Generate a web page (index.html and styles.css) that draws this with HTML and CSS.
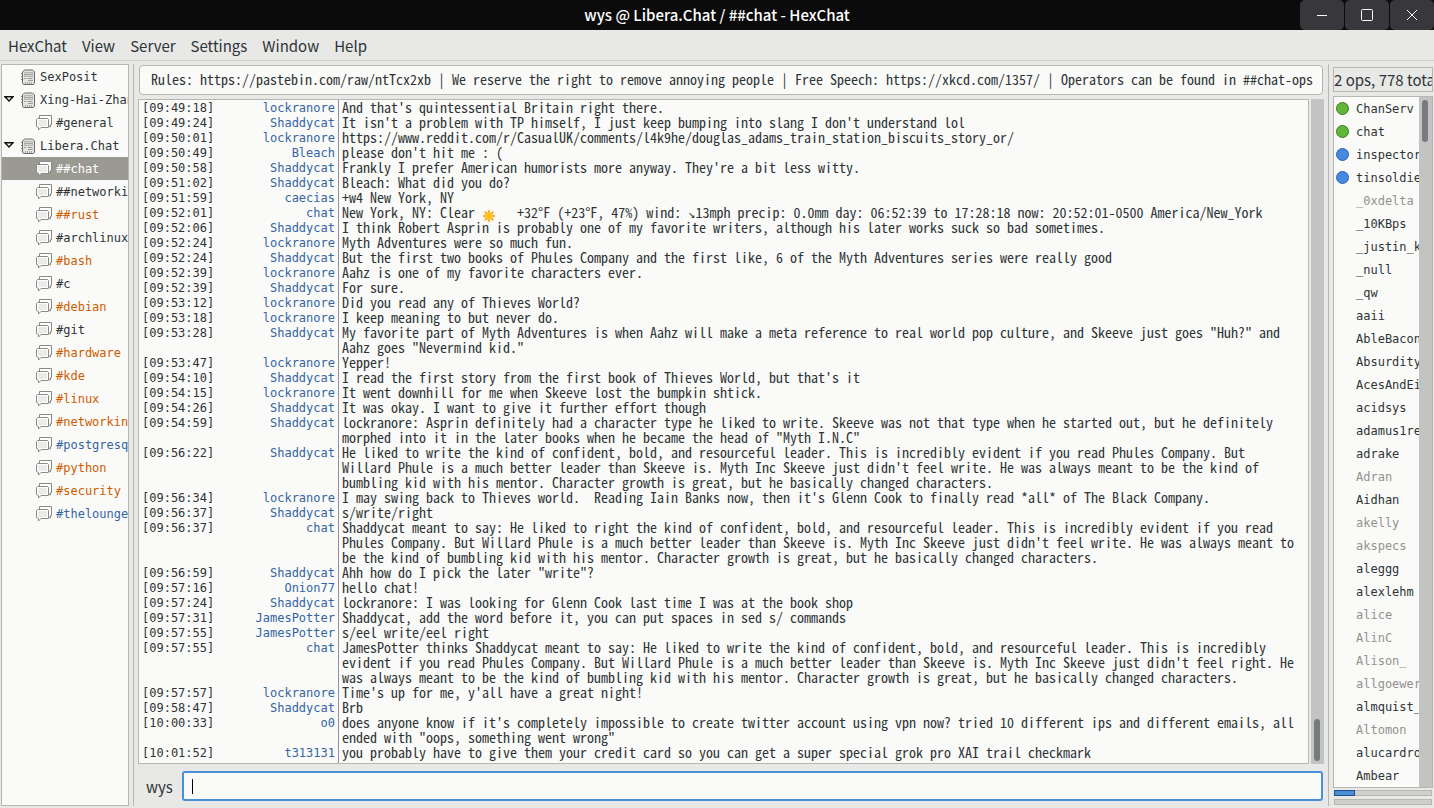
FILE: index.html
```html
<!DOCTYPE html>
<html lang="en">
<head>
<meta charset="utf-8">
<title>wys @ Libera.Chat / ##chat - HexChat</title>
<link rel="stylesheet" href="styles.css">
</head>
<body>
<svg class="defs" aria-hidden="true">
  <symbol id="server" viewBox="0 0 16 16">
    <path d="M1 4.500h14M1 7.500h14M1 10.500h14" stroke="#888a85"/>
    <path d="M2.500 14V3L4.500 1H12.500L14.500 3V14L13.500 15.500H3.500Z" fill="#e4e4e2" stroke="#6a6c69"/>
    <path d="M4.500 3.500h8v4h-8z" fill="#d3d5d1" stroke="#b4b6b2"/>
    <path d="M5 5.500h7" stroke="#a2a4a0"/>
    <path d="M4 9.500h2M7.500 9.500h5M8 11.500h5" stroke="#9a9c98"/>
    <path d="M5.500 13v2M7.500 13v2M9.500 13v2M11.500 13v2" stroke="#a8aaa6"/>
  </symbol>
  <symbol id="chan" viewBox="0 0 16 16">
    <path d="M3.500 4V.500H15.500V9.500H14.500V12L12 10" fill="#fff" stroke="#888a85"/>
    <path d="M1.500 3.500H11.500L12.500 4.500V12.500H5L2.500 15V12.500L.500 11.500V4.500Z" fill="#fff" stroke="#888a85"/>
    <path d="M2 5h9v6h-9z" fill="#ebebe9"/>
  </symbol>
  <symbol id="open" viewBox="0 0 10 6">
    <path d="M1 .800H9L5 5Z" fill="#fff" stroke="#111" stroke-width="1.400"/>
  </symbol>
</svg>
<div class="window">
  <header class="titlebar">
    <h1 class="title">wys @ Libera.Chat / ##chat - HexChat</h1>
    <div class="controls">
      <button class="control" aria-label="Minimize"><svg viewBox="0 0 14 14"><path d="M2 7.500h10"/></svg></button>
      <button class="control" aria-label="Maximize"><svg viewBox="0 0 14 14"><rect x="1.500" y="1.500" width="11" height="11" rx="1"/></svg></button>
      <button class="control" aria-label="Close"><svg viewBox="0 0 14 14"><path d="M2 2l10 10M12 2L2 12"/></svg></button>
    </div>
  </header>
  <nav class="menubar">
    <button class="menu">HexChat</button><button class="menu">View</button><button class="menu">Server</button><button class="menu">Settings</button><button class="menu">Window</button><button class="menu">Help</button>
  </nav>
  <div class="body">
    <nav class="tree">
      <button class="node server"><i class="arrow"></i><svg><use href="#server"/></svg>SexPosit</button>
      <button class="node server"><svg class="arrow"><use href="#open"/></svg><svg><use href="#server"/></svg>Xing-Hai-Zhan</button>
      <button class="node"><svg><use href="#chan"/></svg>#general</button>
      <button class="node server"><svg class="arrow"><use href="#open"/></svg><svg><use href="#server"/></svg>Libera.Chat</button>
      <button class="node selected"><svg><use href="#chan"/></svg>##chat</button>
      <button class="node"><svg><use href="#chan"/></svg>##networkin</button>
      <button class="node unread"><svg><use href="#chan"/></svg>##rust</button>
      <button class="node"><svg><use href="#chan"/></svg>#archlinux</button>
      <button class="node unread"><svg><use href="#chan"/></svg>#bash</button>
      <button class="node"><svg><use href="#chan"/></svg>#c</button>
      <button class="node unread"><svg><use href="#chan"/></svg>#debian</button>
      <button class="node"><svg><use href="#chan"/></svg>#git</button>
      <button class="node unread"><svg><use href="#chan"/></svg>#hardware</button>
      <button class="node unread"><svg><use href="#chan"/></svg>#kde</button>
      <button class="node unread"><svg><use href="#chan"/></svg>#linux</button>
      <button class="node unread"><svg><use href="#chan"/></svg>#networking</button>
      <button class="node highlight"><svg><use href="#chan"/></svg>#postgresql</button>
      <button class="node unread"><svg><use href="#chan"/></svg>#python</button>
      <button class="node unread"><svg><use href="#chan"/></svg>#security</button>
      <button class="node highlight"><svg><use href="#chan"/></svg>#thelounge</button>
    </nav>
    <main class="main">
      <input class="topic" aria-label="Topic" value="Rules: https://pastebin.com/raw/ntTcx2xb | We reserve the right to remove annoying people | Free Speech: https://xkcd.com/1357/ | Operators can be found in ##chat-ops">
      <div class="chat">
        <ol class="log">
          <li class="row"><time>[09:49:18]</time><b>lockranore</b><p>And that's quintessential Britain right there.</p></li>
          <li class="row"><time>[09:49:24]</time><b>Shaddycat</b><p>It isn't a problem with TP himself, I just keep bumping into slang I don't understand lol</p></li>
          <li class="row"><time>[09:50:01]</time><b>lockranore</b><p>https://www.reddit.com/r/CasualUK/comments/l4k9he/douglas_adams_train_station_biscuits_story_or/</p></li>
          <li class="row"><time>[09:50:49]</time><b>Bleach</b><p>please don't hit me : (</p></li>
          <li class="row"><time>[09:50:58]</time><b>Shaddycat</b><p>Frankly I prefer American humorists more anyway. They're a bit less witty.</p></li>
          <li class="row"><time>[09:51:02]</time><b>Shaddycat</b><p>Bleach: What did you do?</p></li>
          <li class="row"><time>[09:51:59]</time><b>caecias</b><p>+w4 New York, NY</p></li>
          <li class="row"><time>[09:52:01]</time><b>chat</b><p>New York, NY: Clear <svg class="sun" viewBox="0 0 14 14" role="img" aria-label="sun"><path d="M7 0l1.200 3h-2.400zM7 14l1.200-3h-2.400zM0 7l3-1.200v2.400zM14 7l-3-1.200v2.400zM2 2l3 1.300-1.700 1.700zM12 2l-3 1.300 1.700 1.700zM2 12l3-1.300-1.700-1.700zM12 12l-3-1.300 1.700-1.700z" fill="#fb9a1c"/><circle cx="7" cy="7" r="4" fill="#fcc021"/></svg>   +32°F (+23°F, 47%) wind: <span class="wind">↘</span>13mph precip: 0.0mm day: 06:52:39 to 17:28:18 now: 20:52:01-0500 America/New_York</p></li>
          <li class="row"><time>[09:52:06]</time><b>Shaddycat</b><p>I think Robert Asprin is probably one of my favorite writers, although his later works suck so bad sometimes.</p></li>
          <li class="row"><time>[09:52:24]</time><b>lockranore</b><p>Myth Adventures were so much fun.</p></li>
          <li class="row"><time>[09:52:24]</time><b>Shaddycat</b><p>But the first two books of Phules Company and the first like, 6 of the Myth Adventures series were really good</p></li>
          <li class="row"><time>[09:52:39]</time><b>lockranore</b><p>Aahz is one of my favorite characters ever.</p></li>
          <li class="row"><time>[09:52:39]</time><b>Shaddycat</b><p>For sure.</p></li>
          <li class="row"><time>[09:53:12]</time><b>lockranore</b><p>Did you read any of Thieves World?</p></li>
          <li class="row"><time>[09:53:18]</time><b>lockranore</b><p>I keep meaning to but never do.</p></li>
          <li class="row"><time>[09:53:28]</time><b>Shaddycat</b><p>My favorite part of Myth Adventures is when Aahz will make a meta reference to real world pop culture, and Skeeve just goes "Huh?" and Aahz goes "Nevermind kid."</p></li>
          <li class="row"><time>[09:53:47]</time><b>lockranore</b><p>Yepper!</p></li>
          <li class="row"><time>[09:54:10]</time><b>Shaddycat</b><p>I read the first story from the first book of Thieves World, but that's it</p></li>
          <li class="row"><time>[09:54:15]</time><b>lockranore</b><p>It went downhill for me when Skeeve lost the bumpkin shtick.</p></li>
          <li class="row"><time>[09:54:26]</time><b>Shaddycat</b><p>It was okay. I want to give it further effort though</p></li>
          <li class="row"><time>[09:54:59]</time><b>Shaddycat</b><p>lockranore: Asprin definitely had a character type he liked to write. Skeeve was not that type when he started out, but he definitely morphed into it in the later books when he became the head of "Myth I.N.C"</p></li>
          <li class="row"><time>[09:56:22]</time><b>Shaddycat</b><p>He liked to write the kind of confident, bold, and resourceful leader. This is incredibly evident if you read Phules Company. But Willard Phule is a much better leader than Skeeve is. Myth Inc Skeeve just didn't feel write. He was always meant to be the kind of bumbling kid with his mentor. Character growth is great, but he basically changed characters.</p></li>
          <li class="row"><time>[09:56:34]</time><b>lockranore</b><p>I may swing back to Thieves world.  Reading Iain Banks now, then it's Glenn Cook to finally read *all* of The Black Company.</p></li>
          <li class="row"><time>[09:56:37]</time><b>Shaddycat</b><p>s/write/right</p></li>
          <li class="row"><time>[09:56:37]</time><b>chat</b><p>Shaddycat meant to say: He liked to right the kind of confident, bold, and resourceful leader. This is incredibly evident if you read Phules Company. But Willard Phule is a much better leader than Skeeve is. Myth Inc Skeeve just didn't feel write. He was always meant to be the kind of bumbling kid with his mentor. Character growth is great, but he basically changed characters.</p></li>
          <li class="row"><time>[09:56:59]</time><b>Shaddycat</b><p>Ahh how do I pick the later "write"?</p></li>
          <li class="row"><time>[09:57:16]</time><b>Onion77</b><p>hello chat!</p></li>
          <li class="row"><time>[09:57:24]</time><b>Shaddycat</b><p>lockranore: I was looking for Glenn Cook last time I was at the book shop</p></li>
          <li class="row"><time>[09:57:31]</time><b>JamesPotter</b><p>Shaddycat, add the word before it, you can put spaces in sed s/ commands</p></li>
          <li class="row"><time>[09:57:55]</time><b>JamesPotter</b><p>s/eel write/eel right</p></li>
          <li class="row"><time>[09:57:55]</time><b>chat</b><p>JamesPotter thinks Shaddycat meant to say: He liked to write the kind of confident, bold, and resourceful leader. This is incredibly evident if you read Phules Company. But Willard Phule is a much better leader than Skeeve is. Myth Inc Skeeve just didn't feel right. He was always meant to be the kind of bumbling kid with his mentor. Character growth is great, but he basically changed characters.</p></li>
          <li class="row"><time>[09:57:57]</time><b>lockranore</b><p>Time's up for me, y'all have a great night!</p></li>
          <li class="row"><time>[09:58:47]</time><b>Shaddycat</b><p>Brb</p></li>
          <li class="row"><time>[10:00:33]</time><b>o0</b><p>does anyone know if it's completely impossible to create twitter account using vpn now? tried 10 different ips and different emails, all ended with "oops, something went wrong"</p></li>
          <li class="row"><time>[10:01:52]</time><b>t313131</b><p>you probably have to give them your credit card so you can get a super special grok pro XAI trail checkmark</p></li>
        </ol>
        <div class="track bottom"><i class="thumb"></i></div>
      </div>
      <div class="entry">
        <label for="message">wys</label>
        <div class="field"><i class="caret"></i><input id="message" class="message"></div>
      </div>
    </main>
    <aside class="users">
      <div class="count">2 ops, 778 tota</div>
      <div class="people">
        <ul class="names">
          <li class="op">ChanServ</li><li class="op">chat</li><li class="voice">inspector</li><li class="voice">tinsoldie</li>
          <li class="away">_0xdelta</li><li>_10KBps</li><li>_justin_k</li><li>_null</li><li>_qw</li><li>aaii</li>
          <li>AbleBacon</li><li>Absurdity</li><li>AcesAndEi</li><li>acidsys</li><li>adamus1re</li><li>adrake</li>
          <li class="away">Adran</li><li>Aidhan</li><li class="away">akelly</li><li class="away">akspecs</li><li>aleggg</li><li>alexlehm</li>
          <li class="away">alice</li><li class="away">AlinC</li><li class="away">Alison_</li><li class="away">allgoewer</li><li>almquist_</li><li class="away">Altomon</li>
          <li>alucardro</li><li>Ambear</li>
        </ul>
        <div class="track"><i class="thumb"></i></div>
      </div>
      <div class="meters">
        <div class="meter"><i class="fill"></i></div>
        <div class="meter"></div>
      </div>
    </aside>
  </div>
</div>
</body>
</html>
```
FILE: styles.css
```css
*, *::before { box-sizing: border-box; }
body, h1, ol, ul, p { margin: 0; padding: 0; }
ol, ul { list-style: none; }
button { border: 0; background: none; padding: 0; color: inherit; font: inherit; }
.defs { display: none; }
body {
  background: #e8e8e6;
  color: #2e3436;
  font: 15px/24px "Noto Sans CJK SC", sans-serif;
}
.window { display: flex; flex-direction: column; height: 100vh; }

.titlebar {
  display: grid;
  grid-template-columns: 1fr auto 1fr;
  align-items: center;
  flex: none;
  height: 30px;
  background: #0b0b0b;
  color: #fff;
}
.title { grid-column: 2; font-size: 15px; font-weight: 500; line-height: 30px; }
.controls { display: flex; justify-content: flex-end; gap: 1px; }
.control {
  display: flex;
  align-items: center;
  justify-content: center;
  width: 44px;
  height: 30px;
  border-radius: 5px;
  background: #38383c;
}
.control svg { width: 14px; height: 14px; fill: none; stroke: #fff; }

.menubar {
  display: flex;
  flex: none;
  gap: 15px;
  height: 31px;
  padding: 0 8px;
  border-bottom: 1px solid #cfcfcd;
  line-height: 32px;
}

.body { display: flex; flex: 1; min-height: 0; padding: 3px 1px 2px; }
.tree, .names, .log {
  font-family: "DejaVu Sans Mono", monospace;
  font-size: 12px;
}
.topic, .message, .row p {
  font-family: "Noto Sans Mono CJK SC", "DejaVu Sans Mono", monospace;
  font-size: 14px;
}
.tree {
  flex: none;
  width: 128px;
  overflow: hidden;
  border: 1px solid #b6b6b3;
  background: #fafaf8;
}
.node {
  display: flex;
  align-items: center;
  gap: 4px;
  width: 100%;
  height: 23px;
  padding-left: 34px;
  overflow: hidden;
  white-space: nowrap;
}
.node svg { flex: none; width: 16px; height: 16px; }
.node.server { padding-left: 2px; }
.node .arrow { flex: none; width: 10px; height: 6px; margin: 0 2px 2px 0; }
.selected { background: #9a9992; color: #fff; }
.unread { color: #ce5c00; }
.highlight { color: #3465a4; }

.main {
  display: flex;
  flex: 1;
  flex-direction: column;
  min-width: 0;
  margin: 0 4px;
  padding: 1px 4px 5px;
  border: solid #b6b6b3;
  border-width: 0 1px;
}
.topic {
  flex: none;
  height: 30px;
  margin: 0 1px;
  padding: 0 8px 2px 11px;
  border: 1px solid #b6b6b3;
  border-radius: 4px;
  background: #fafaf8;
  color: #2e3436;
}
.chat { display: flex; flex: 1; gap: 2px; min-height: 0; margin-top: 4px; }
.log {
  display: flex;
  flex: 1;
  flex-direction: column;
  min-width: 0;
  overflow: hidden;
  border: 1px solid #b6b6b3;
  background: #fafaf8;
  line-height: 15px;
}
.row { display: grid; flex: none; grid-template-columns: 70px 126px 1fr; padding-left: 3px; }
.row:last-child { flex: 1; }
.row time, .row b { padding-top: 1px; line-height: 14px; }
.row b { padding-right: 3px; color: #3465a4; font-weight: 400; text-align: right; }
.row p { padding: 0 9px 0 3px; border-left: 1px solid #8f8f9d; white-space: pre-wrap; }
.sun { width: 14px; height: 14px; margin: -3px 0; vertical-align: -2px; }
.wind { font: 12px/1px "DejaVu Sans Mono", monospace; }
.track { display: flex; flex: none; width: 13px; padding: 3px; background: #c2c4c3; }
.thumb { width: 6px; height: 42px; border-radius: 3px; background: #777b7b; }
.bottom { align-items: flex-end; }

.entry { display: flex; flex: none; align-items: center; margin: 7px 1px 0 0; padding-left: 8px; }
.entry label { width: 36px; padding-top: 2px; }
.field {
  display: flex;
  flex: 1;
  align-items: center;
  height: 30px;
  padding: 0 8px;
  border: 2px solid #4a90d9;
  border-radius: 3px;
  background: #fafaf8;
}
.caret { width: 1px; height: 15px; background: #000; }
.message { flex: 1; min-width: 0; height: 20px; border: 0; outline: 0; background: none; }

.users { display: flex; flex: none; flex-direction: column; width: 100px; padding: 3px 0 1px; }
.count {
  flex: none;
  height: 25px;
  overflow: hidden;
  border: 1px solid #b6b6b3;
  white-space: nowrap;
}
.people {
  display: flex;
  flex: 1;
  min-height: 0;
  margin-top: 4px;
  border: 1px solid #b6b6b3;
  background: #fafaf8;
}
.names { flex: 1; min-width: 0; padding-top: 1px; overflow: hidden; line-height: 23px; }
.names li { display: flex; align-items: center; gap: 7px; height: 23px; padding-left: 2px; white-space: nowrap; }
.names li::before { content: ""; flex: none; width: 13px; height: 13px; margin-bottom: 2px; border-radius: 50%; }
.names .op::before { border: 1px solid #3c7a26; background: #5fb637; }
.names .voice::before { border: 1px solid #2a64b4; background: #458ae0; }
.away { color: #92928f; }
.meters { display: flex; flex: none; flex-direction: column; gap: 3px; margin-top: 2px; padding: 0 1px; }
.meter { height: 6px; border: 1px solid #b6b6b3; background: #cfcfcd; }
.fill { display: block; width: 20%; height: 100%; background: #4a90d9; outline: 1px solid #1f4f86; }
```
